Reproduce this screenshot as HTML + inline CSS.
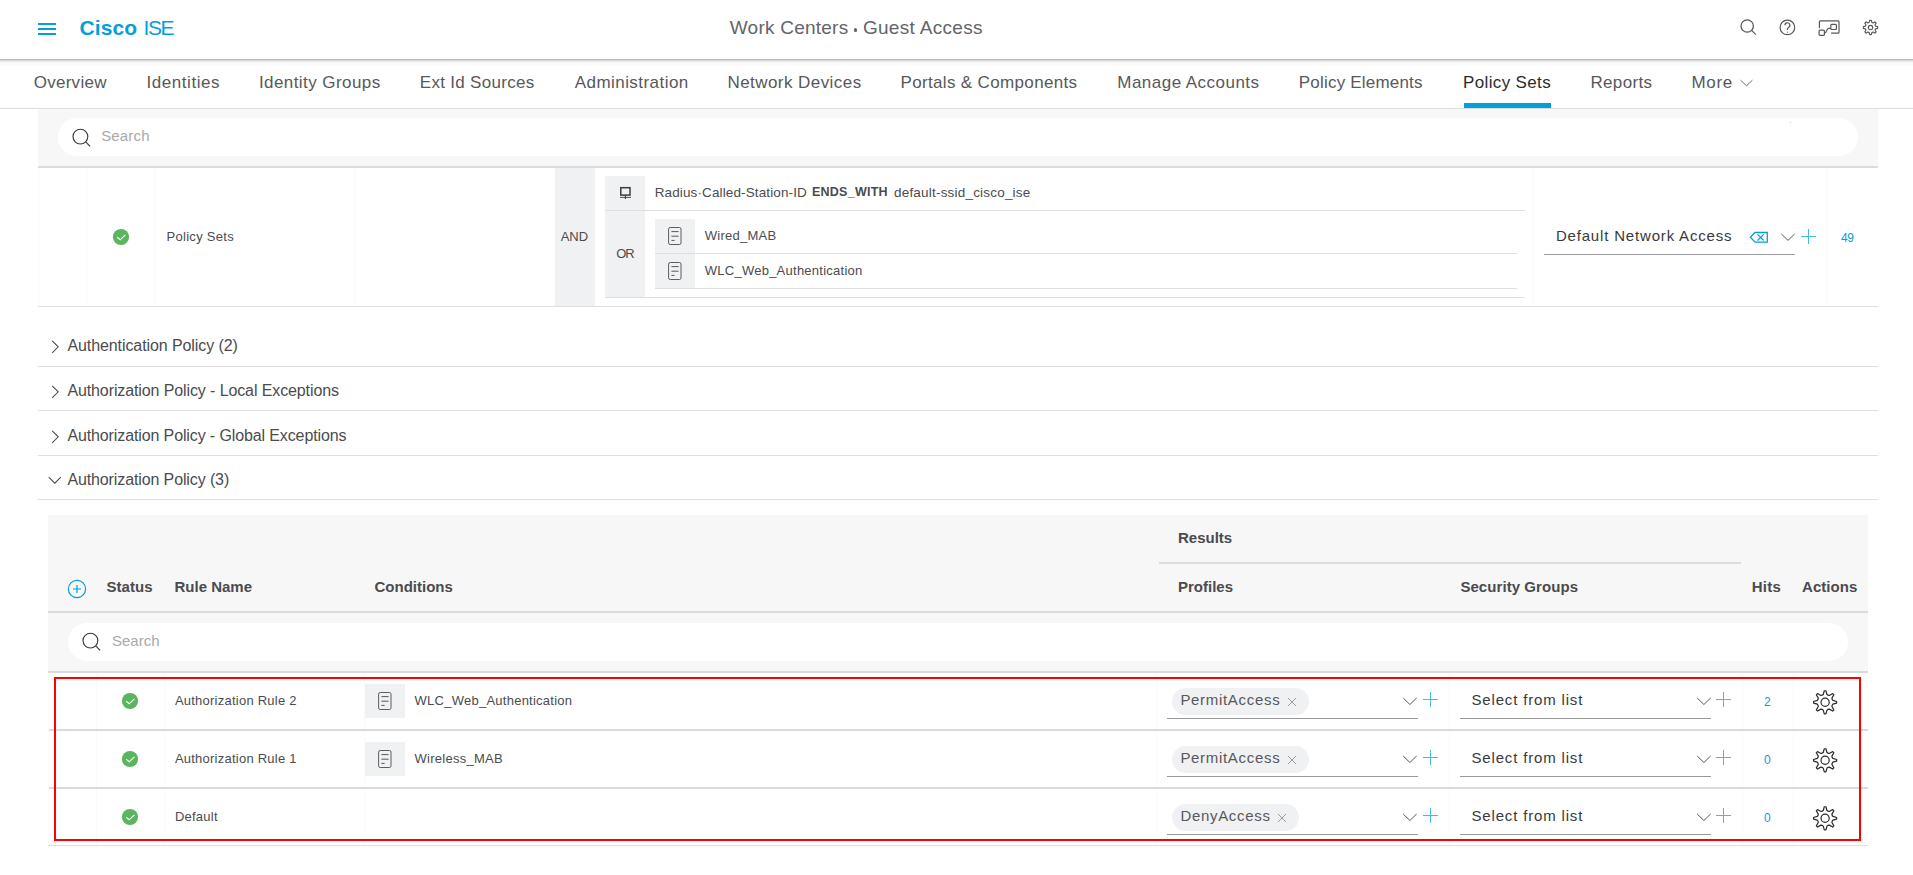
<!DOCTYPE html><html><head><meta charset="utf-8"><style>
html,body{margin:0;padding:0;width:1913px;height:875px;overflow:hidden;background:#fff;font-family:"Liberation Sans",sans-serif}
.t{position:absolute;white-space:pre}
.r{position:absolute;display:block}
</style></head><body>
<div class="r" style="left:0px;top:0px;width:1913px;height:59px;background:#fff"></div>
<div class="r" style="left:0px;top:59px;width:1913px;height:1px;background:#bdbdbd"></div>
<div class="r" style="left:0px;top:60px;width:1913px;height:1px;background:#d8d8d8"></div>
<div class="r" style="left:0px;top:61px;width:1913px;height:1px;background:#ececec"></div>
<div class="r" style="left:0px;top:62px;width:1913px;height:1px;background:#f7f7f7"></div>
<div class="r" style="left:0px;top:63px;width:1913px;height:3px;background:#fbfbfb"></div>
<div class="r" style="left:38px;top:23px;width:18px;height:2px;background:#049fd9"></div>
<div class="r" style="left:38px;top:28px;width:18px;height:2px;background:#049fd9"></div>
<div class="r" style="left:38px;top:33px;width:18px;height:2px;background:#049fd9"></div>
<div class="t" style="left:79.4px;top:17.22px;font-size:21px;line-height:21px;font-weight:bold;color:#049fd9;letter-spacing:0.125px;">Cisco</div>
<div class="t" style="left:143.5px;top:17.22px;font-size:21px;line-height:21px;font-weight:normal;color:#049fd9;letter-spacing:-1.45px;">ISE</div>
<div class="t" style="left:729.8px;top:17.92px;font-size:19px;line-height:19px;font-weight:normal;color:#646467;letter-spacing:0.236px;">Work Centers</div>
<div class="t" style="left:862.9px;top:17.92px;font-size:19px;line-height:19px;font-weight:normal;color:#646467;letter-spacing:0.309px;">Guest Access</div>
<div class="r" style="left:853.6px;top:28.4px;width:3.2px;height:3.2px;background:#646467;border-radius:50%"></div>
<svg class="r" style="left:1738px;top:16px" width="20" height="20" viewBox="0 0 20 20"><circle cx="9.2" cy="10" r="6.2" fill="none" stroke="#58585b" stroke-width="1.3"/><line x1="13.6" y1="14.4" x2="17.8" y2="18.6" stroke="#58585b" stroke-width="1.3"/></svg>
<svg class="r" style="left:1778px;top:18px" width="20" height="20" viewBox="0 0 20 20"><circle cx="9.4" cy="9.4" r="7.3" fill="none" stroke="#58585b" stroke-width="1.2"/><path d="M6.9 7.3a2.5 2.5 0 1 1 3.6 2.2c-.8.4-1.1.9-1.1 1.7v.9" fill="none" stroke="#58585b" stroke-width="1.2"/><circle cx="9.4" cy="14.1" r=".7" fill="#58585b"/></svg>
<svg class="r" style="left:1817px;top:18px" width="24" height="20" viewBox="0 0 24 20"><path d="M2.4 10.3V3.8a.9.9 0 0 1 .9-.9h17.8a.9.9 0 0 1 .9.9v10.4a.9.9 0 0 1-.9.9H14.1" fill="none" stroke="#58585b" stroke-width="1.2"/><rect x="2.1" y="12.2" width="5.3" height="5.2" rx=".9" fill="none" stroke="#58585b" stroke-width="1.2"/><rect x="13.8" y="6.4" width="5.6" height="5.1" rx=".9" fill="none" stroke="#58585b" stroke-width="1.2"/><path d="M7.5 15c1.3 0 1.6-.6 2.1-2.1.5-1.4.9-2.6 2.3-2.6h2" fill="none" stroke="#58585b" stroke-width="1.2"/></svg>
<svg class="r" style="left:1861px;top:18px" width="20" height="20" viewBox="0 0 20 20"><path d="M8.62 2.35 L10.38 2.35 L10.83 4.37 Q11.39 4.95 12.19 4.93 L13.93 3.83 L15.17 5.07 L14.07 6.81 Q14.05 7.61 14.63 8.17 L16.65 8.62 L16.65 10.38 L14.63 10.83 Q14.05 11.39 14.07 12.19 L15.17 13.93 L13.93 15.17 L12.19 14.07 Q11.39 14.05 10.83 14.63 L10.38 16.65 L8.62 16.65 L8.17 14.63 Q7.61 14.05 6.81 14.07 L5.07 15.17 L3.83 13.93 L4.93 12.19 Q4.95 11.39 4.37 10.83 L2.35 10.38 L2.35 8.62 L4.37 8.17 Q4.95 7.61 4.93 6.81 L3.83 5.07 L5.07 3.83 L6.81 4.93 Q7.61 4.95 8.17 4.37 Z" fill="none" stroke="#58585b" stroke-width="1.15" stroke-linejoin="round"/><circle cx="9.5" cy="9.5" r="2.2" fill="none" stroke="#58585b" stroke-width="1.15"/></svg>
<div class="t" style="left:33.7px;top:73.61px;font-size:17px;line-height:17px;font-weight:normal;color:#58585b;letter-spacing:0.271px;">Overview</div>
<div class="t" style="left:146.6px;top:73.61px;font-size:17px;line-height:17px;font-weight:normal;color:#58585b;letter-spacing:0.544px;">Identities</div>
<div class="t" style="left:258.9px;top:73.61px;font-size:17px;line-height:17px;font-weight:normal;color:#58585b;letter-spacing:0.429px;">Identity Groups</div>
<div class="t" style="left:419.8px;top:73.61px;font-size:17px;line-height:17px;font-weight:normal;color:#58585b;letter-spacing:0.3px;">Ext Id Sources</div>
<div class="t" style="left:574.7px;top:73.61px;font-size:17px;line-height:17px;font-weight:normal;color:#58585b;letter-spacing:0.454px;">Administration</div>
<div class="t" style="left:727.5px;top:73.61px;font-size:17px;line-height:17px;font-weight:normal;color:#58585b;letter-spacing:0.436px;">Network Devices</div>
<div class="t" style="left:900.5px;top:73.61px;font-size:17px;line-height:17px;font-weight:normal;color:#58585b;letter-spacing:0.342px;">Portals &amp; Components</div>
<div class="t" style="left:1117.3px;top:73.61px;font-size:17px;line-height:17px;font-weight:normal;color:#58585b;letter-spacing:0.471px;">Manage Accounts</div>
<div class="t" style="left:1298.8px;top:73.61px;font-size:17px;line-height:17px;font-weight:normal;color:#58585b;letter-spacing:0.2px;">Policy Elements</div>
<div class="t" style="left:1463.0px;top:73.61px;font-size:17px;line-height:17px;font-weight:normal;color:#2b2b2d;letter-spacing:0.36px;">Policy Sets</div>
<div class="t" style="left:1590.4px;top:73.61px;font-size:17px;line-height:17px;font-weight:normal;color:#58585b;letter-spacing:0.35px;">Reports</div>
<div class="t" style="left:1691.4px;top:73.61px;font-size:17px;line-height:17px;font-weight:normal;color:#58585b;letter-spacing:0.7px;">More</div>
<svg class="r" style="left:1739px;top:76.7px" width="16" height="10" viewBox="0 0 16 10"><path d="M1.6 3.2l5.9 5.6 5.9-5.6" fill="none" stroke="#6a6a6d" stroke-width="1"/></svg>
<div class="r" style="left:1464px;top:103px;width:87px;height:5px;background:#049fd9"></div>
<div class="r" style="left:0px;top:108px;width:1913px;height:1px;background:#dcdcdc"></div>
<div class="r" style="left:38px;top:109px;width:1840px;height:57px;background:#f7f7f7"></div>
<div class="r" style="left:38px;top:166px;width:1840px;height:2px;background:#dcdcdc"></div>
<div class="r" style="left:58px;top:118px;width:1800px;height:38px;background:#fff;border-radius:19px"></div>
<svg class="r" style="left:71px;top:127px" width="22" height="22" viewBox="0 0 22 22"><circle cx="9.4" cy="9.6" r="7.4" fill="none" stroke="#3c3c3f" stroke-width="1.15"/><line x1="14.7" y1="14.9" x2="19.1" y2="19.3" stroke="#3c3c3f" stroke-width="1.2"/></svg>
<div class="t" style="left:101.2px;top:128.30px;font-size:15px;line-height:15px;font-weight:normal;color:#a9a9ab;letter-spacing:0.16px;">Search</div>
<div class="r" style="left:1790px;top:122px;width:1px;height:1px;background:#c9c9c9"></div>
<div class="r" style="left:38px;top:168px;width:1px;height:138px;background:#fafafa"></div>
<div class="r" style="left:86px;top:168px;width:1px;height:138px;background:#fafafa"></div>
<div class="r" style="left:154px;top:168px;width:1px;height:138px;background:#fafafa"></div>
<div class="r" style="left:354px;top:168px;width:1px;height:138px;background:#fafafa"></div>
<div class="r" style="left:1533px;top:168px;width:1px;height:138px;background:#fafafa"></div>
<div class="r" style="left:1826px;top:168px;width:1px;height:138px;background:#fafafa"></div>
<svg class="r" style="left:111.5px;top:228.3px" width="18" height="18" viewBox="0 0 18 18"><circle cx="9" cy="9" r="8.1" fill="#5ab55e"/><path d="M5.2 9.2l3 2.6 5.2-5" fill="none" stroke="#fff" stroke-width="1.15"/></svg>
<div class="t" style="left:166.5px;top:230.00px;font-size:13px;line-height:13px;font-weight:normal;color:#4b4b4e;letter-spacing:0.29px;">Policy Sets</div>
<div class="r" style="left:555px;top:168px;width:40px;height:138px;background:#f0f1f3"></div>
<div class="t" style="left:560.7px;top:230.00px;font-size:13px;line-height:13px;font-weight:normal;color:#4b4b4e;letter-spacing:-0.05px;">AND</div>
<div class="r" style="left:605px;top:176px;width:40px;height:34px;background:#f0f1f3"></div>
<svg class="r" style="left:618px;top:184px" width="16" height="16" viewBox="0 0 16 16"><rect x="2.8" y="3.7" width="9.2" height="7.4" fill="none" stroke="#3c3c3f" stroke-width="1.5"/><line x1="2" y1="13.4" x2="13" y2="13.4" stroke="#3c3c3f" stroke-width="0.9"/><line x1="7.4" y1="11.2" x2="7.4" y2="15" stroke="#3c3c3f" stroke-width="1.1"/></svg>
<div class="t" style="left:654.7px;top:185.57px;font-size:13.5px;line-height:13.5px;font-weight:normal;color:#4b4b4e;letter-spacing:0.122px;">Radius&middot;Called-Station-ID</div>
<div class="t" style="left:811.9000000000001px;top:186.42px;font-size:12.5px;line-height:12.5px;font-weight:bold;color:#4b4b4e;letter-spacing:0.262px;">ENDS_WITH</div>
<div class="t" style="left:894.0px;top:185.57px;font-size:13.5px;line-height:13.5px;font-weight:normal;color:#4b4b4e;letter-spacing:0.2px;">default-ssid_cisco_ise</div>
<div class="r" style="left:605px;top:210px;width:920px;height:1px;background:#dfdfdf"></div>
<div class="r" style="left:605px;top:211px;width:40px;height:86px;background:#f0f1f3"></div>
<div class="t" style="left:616.3px;top:247.00px;font-size:13px;line-height:13px;font-weight:normal;color:#4b4b4e;letter-spacing:-1.2px;">OR</div>
<div class="r" style="left:655px;top:219px;width:40px;height:34px;background:#f0f1f3"></div>
<svg class="r" style="left:666.8px;top:226px" width="16" height="20" viewBox="0 0 16 20"><rect x="1.6" y="1.5" width="12.4" height="17" rx="1.6" fill="none" stroke="#5d5d60" stroke-width="1"/><line x1="4.4" y1="5.6" x2="11.6" y2="5.6" stroke="#58585b" stroke-width="1"/><line x1="4.4" y1="10.2" x2="11.6" y2="10.2" stroke="#58585b" stroke-width="1"/><line x1="4.4" y1="14.4" x2="7.6" y2="14.4" stroke="#58585b" stroke-width="1"/></svg>
<div class="t" style="left:704.8px;top:229.00px;font-size:13px;line-height:13px;font-weight:normal;color:#4b4b4e;letter-spacing:0.248px;">Wired_MAB</div>
<div class="r" style="left:655px;top:253px;width:862px;height:1px;background:#dfdfdf"></div>
<div class="r" style="left:655px;top:254px;width:40px;height:34px;background:#f0f1f3"></div>
<svg class="r" style="left:666.8px;top:261px" width="16" height="20" viewBox="0 0 16 20"><rect x="1.6" y="1.5" width="12.4" height="17" rx="1.6" fill="none" stroke="#5d5d60" stroke-width="1"/><line x1="4.4" y1="5.6" x2="11.6" y2="5.6" stroke="#58585b" stroke-width="1"/><line x1="4.4" y1="10.2" x2="11.6" y2="10.2" stroke="#58585b" stroke-width="1"/><line x1="4.4" y1="14.4" x2="7.6" y2="14.4" stroke="#58585b" stroke-width="1"/></svg>
<div class="t" style="left:704.8px;top:264.00px;font-size:13px;line-height:13px;font-weight:normal;color:#4b4b4e;letter-spacing:0.248px;">WLC_Web_Authentication</div>
<div class="r" style="left:655px;top:288px;width:862px;height:1px;background:#dfdfdf"></div>
<div class="r" style="left:605px;top:297px;width:920px;height:1px;background:#dfdfdf"></div>
<div class="t" style="left:1555.9px;top:228.30px;font-size:15px;line-height:15px;font-weight:normal;color:#39393b;letter-spacing:0.824px;">Default Network Access</div>
<svg class="r" style="left:1747px;top:229px" width="24" height="16" viewBox="0 0 24 16"><path d="M8 3.5H20.3v9.6H8L3.4 8.3z" fill="none" stroke="#049fd9" stroke-width="1.3" stroke-linejoin="miter"/><path d="M10.5 5.3l6.2 6.2M16.7 5.3l-6.2 6.2" stroke="#049fd9" stroke-width="1.2"/></svg>
<svg class="r" style="left:1779px;top:230px" width="18" height="12" viewBox="0 0 18 12"><path d="M2.4 4l6.6 6.4 6.6-6.4" fill="none" stroke="#58585b" stroke-width="1"/></svg>
<div class="r" style="left:1808px;top:229px;width:1px;height:15px;background:#45b9e6"></div>
<div class="r" style="left:1801px;top:236px;width:15px;height:1px;background:#45b9e6"></div>
<div class="r" style="left:1544px;top:254px;width:251px;height:1px;background:#9b9b9b"></div>
<div class="t" style="left:1841.1px;top:231.84px;font-size:12px;line-height:12px;font-weight:normal;color:#049fd9;letter-spacing:-0.4px;">49</div>
<div class="r" style="left:38px;top:306px;width:1840px;height:1px;background:#dfdfdf"></div>
<div class="t" style="left:67.4px;top:338.46px;font-size:16px;line-height:16px;font-weight:normal;color:#4b4b4e;letter-spacing:-0.087px;">Authentication Policy (2)</div>
<svg class="r" style="left:50px;top:339px" width="10" height="16" viewBox="0 0 10 16"><path d="M2.2 1.8l6 6-6 6" fill="none" stroke="#4b4b4e" stroke-width="1.05"/></svg>
<div class="t" style="left:67.4px;top:383.46px;font-size:16px;line-height:16px;font-weight:normal;color:#4b4b4e;letter-spacing:-0.108px;">Authorization Policy - Local Exceptions</div>
<svg class="r" style="left:50px;top:384px" width="10" height="16" viewBox="0 0 10 16"><path d="M2.2 1.8l6 6-6 6" fill="none" stroke="#4b4b4e" stroke-width="1.05"/></svg>
<div class="t" style="left:67.4px;top:428.46px;font-size:16px;line-height:16px;font-weight:normal;color:#4b4b4e;letter-spacing:-0.118px;">Authorization Policy - Global Exceptions</div>
<svg class="r" style="left:50px;top:429px" width="10" height="16" viewBox="0 0 10 16"><path d="M2.2 1.8l6 6-6 6" fill="none" stroke="#4b4b4e" stroke-width="1.05"/></svg>
<div class="t" style="left:67.4px;top:472.46px;font-size:16px;line-height:16px;font-weight:normal;color:#4b4b4e;letter-spacing:-0.117px;">Authorization Policy (3)</div>
<svg class="r" style="left:47px;top:474.5px" width="16" height="10" viewBox="0 0 16 10"><path d="M1.8 2.2l6 6 6-6" fill="none" stroke="#4b4b4e" stroke-width="1.05"/></svg>
<div class="r" style="left:38px;top:366px;width:1840px;height:1px;background:#dfdfdf"></div>
<div class="r" style="left:38px;top:410px;width:1840px;height:1px;background:#dfdfdf"></div>
<div class="r" style="left:38px;top:455px;width:1840px;height:1px;background:#dfdfdf"></div>
<div class="r" style="left:38px;top:499px;width:1840px;height:1px;background:#dfdfdf"></div>
<div class="r" style="left:48px;top:515px;width:1820px;height:157px;background:#f7f7f7"></div>
<div class="t" style="left:1178px;top:530.30px;font-size:15px;line-height:15px;font-weight:bold;color:#4b4b4e;letter-spacing:0px;">Results</div>
<div class="r" style="left:1159px;top:562px;width:582px;height:2px;background:#dcdcdc"></div>
<svg class="r" style="left:67px;top:579px" width="20" height="20" viewBox="0 0 20 20"><circle cx="10" cy="10" r="8.6" fill="none" stroke="#049fd9" stroke-width="1.2"/><path d="M10 6v8M6 10h8" stroke="#049fd9" stroke-width="1.2"/></svg>
<div class="t" style="left:106.5px;top:579.30px;font-size:15px;line-height:15px;font-weight:bold;color:#4b4b4e;letter-spacing:0.06px;">Status</div>
<div class="t" style="left:174.5px;top:579.30px;font-size:15px;line-height:15px;font-weight:bold;color:#4b4b4e;letter-spacing:0px;">Rule Name</div>
<div class="t" style="left:374.5px;top:579.30px;font-size:15px;line-height:15px;font-weight:bold;color:#4b4b4e;letter-spacing:0px;">Conditions</div>
<div class="t" style="left:1178px;top:579.30px;font-size:15px;line-height:15px;font-weight:bold;color:#4b4b4e;letter-spacing:0px;">Profiles</div>
<div class="t" style="left:1460.4px;top:579.30px;font-size:15px;line-height:15px;font-weight:bold;color:#4b4b4e;letter-spacing:0.064px;">Security Groups</div>
<div class="t" style="left:1751.8px;top:579.30px;font-size:15px;line-height:15px;font-weight:bold;color:#4b4b4e;letter-spacing:0.2px;">Hits</div>
<div class="t" style="left:1802.0px;top:579.30px;font-size:15px;line-height:15px;font-weight:bold;color:#4b4b4e;letter-spacing:0.05px;">Actions</div>
<div class="r" style="left:48px;top:611px;width:1820px;height:2px;background:#dadada"></div>
<div class="r" style="left:68px;top:623px;width:1780px;height:38px;background:#fff;border-radius:19px"></div>
<svg class="r" style="left:81px;top:631px" width="22" height="22" viewBox="0 0 22 22"><circle cx="9.4" cy="9.6" r="7.4" fill="none" stroke="#3c3c3f" stroke-width="1.15"/><line x1="14.7" y1="14.9" x2="19.1" y2="19.3" stroke="#3c3c3f" stroke-width="1.2"/></svg>
<div class="t" style="left:112px;top:633.30px;font-size:15px;line-height:15px;font-weight:normal;color:#a9a9ab;letter-spacing:0px;">Search</div>
<div class="r" style="left:48px;top:671px;width:1820px;height:2px;background:#dadada"></div>
<div class="r" style="left:96px;top:673px;width:1px;height:56px;background:#fafafa"></div>
<div class="r" style="left:164px;top:673px;width:1px;height:56px;background:#fafafa"></div>
<div class="r" style="left:364px;top:673px;width:1px;height:56px;background:#fafafa"></div>
<div class="r" style="left:1156px;top:673px;width:1px;height:56px;background:#fafafa"></div>
<div class="r" style="left:1449px;top:673px;width:1px;height:56px;background:#fafafa"></div>
<div class="r" style="left:1742px;top:673px;width:1px;height:56px;background:#fafafa"></div>
<div class="r" style="left:1793px;top:673px;width:1px;height:56px;background:#fafafa"></div>
<svg class="r" style="left:121.4px;top:692px" width="18" height="18" viewBox="0 0 18 18"><circle cx="9" cy="9" r="8.1" fill="#5ab55e"/><path d="M5.2 9.2l3 2.6 5.2-5" fill="none" stroke="#fff" stroke-width="1.15"/></svg>
<div class="t" style="left:174.9px;top:694.00px;font-size:13px;line-height:13px;font-weight:normal;color:#4b4b4e;letter-spacing:0.237px;">Authorization Rule 2</div>
<div class="r" style="left:365px;top:684px;width:40px;height:34px;background:#f0f1f3"></div>
<svg class="r" style="left:376.8px;top:691px" width="16" height="20" viewBox="0 0 16 20"><rect x="1.6" y="1.5" width="12.4" height="17" rx="1.6" fill="none" stroke="#5d5d60" stroke-width="1"/><line x1="4.4" y1="5.6" x2="11.6" y2="5.6" stroke="#58585b" stroke-width="1"/><line x1="4.4" y1="10.2" x2="11.6" y2="10.2" stroke="#58585b" stroke-width="1"/><line x1="4.4" y1="14.4" x2="7.6" y2="14.4" stroke="#58585b" stroke-width="1"/></svg>
<div class="t" style="left:414.6px;top:694.00px;font-size:13px;line-height:13px;font-weight:normal;color:#4b4b4e;letter-spacing:0.248px;">WLC_Web_Authentication</div>
<div class="r" style="left:1172px;top:688px;width:137px;height:27px;background:#f0f1f3;border-radius:14px"></div>
<div class="t" style="left:1180.4px;top:692.30px;font-size:15px;line-height:15px;font-weight:normal;color:#58585b;letter-spacing:0.691px;">PermitAccess</div>
<svg class="r" style="left:1287px;top:697px" width="10" height="10" viewBox="0 0 10 10"><path d="M1 1l8 8M9 1l-8 8" stroke="#9a9a9d" stroke-width="1"/></svg>
<div class="r" style="left:1167px;top:718px;width:251px;height:1px;background:#999999"></div>
<svg class="r" style="left:1401px;top:694px" width="18" height="12" viewBox="0 0 18 12"><path d="M2.2 4l6.7 6.5 6.7-6.5" fill="none" stroke="#58585b" stroke-width="1"/></svg>
<div class="r" style="left:1430px;top:692px;width:1px;height:15px;background:#45b9e6"></div>
<div class="r" style="left:1423px;top:699px;width:15px;height:1px;background:#45b9e6"></div>
<div class="t" style="left:1471.5px;top:692.30px;font-size:15px;line-height:15px;font-weight:normal;color:#39393b;letter-spacing:0.833px;">Select from list</div>
<div class="r" style="left:1460px;top:718px;width:251px;height:1px;background:#999999"></div>
<svg class="r" style="left:1695px;top:694px" width="18" height="12" viewBox="0 0 18 12"><path d="M2.2 4l6.7 6.5 6.7-6.5" fill="none" stroke="#58585b" stroke-width="1"/></svg>
<div class="r" style="left:1723px;top:692px;width:1px;height:15px;background:#45b9e6"></div>
<div class="r" style="left:1716px;top:699px;width:15px;height:1px;background:#45b9e6"></div>
<div class="t" style="left:1764px;top:695.84px;font-size:12px;line-height:12px;font-weight:normal;color:#049fd9;letter-spacing:0px;">2</div>
<svg class="r" style="left:1812px;top:689px" width="26" height="26" viewBox="0 0 26 26"><path d="M12.29 1.73 L13.91 1.73 L14.97 5.52 Q15.95 6.43 17.28 6.48 L20.71 4.55 L21.85 5.69 L19.92 9.12 Q19.97 10.45 20.88 11.43 L24.67 12.49 L24.67 14.11 L20.88 15.17 Q19.97 16.15 19.92 17.48 L21.85 20.91 L20.71 22.05 L17.28 20.12 Q15.95 20.17 14.97 21.08 L13.91 24.87 L12.29 24.87 L11.23 21.08 Q10.25 20.17 8.92 20.12 L5.49 22.05 L4.35 20.91 L6.28 17.48 Q6.23 16.15 5.32 15.17 L1.53 14.11 L1.53 12.49 L5.32 11.43 Q6.23 10.45 6.28 9.12 L4.35 5.69 L5.49 4.55 L8.92 6.48 Q10.25 6.43 11.23 5.52 Z" fill="none" stroke="#2a2a2c" stroke-width="1.2" stroke-linejoin="round"/><circle cx="13.1" cy="13.3" r="4.1" fill="none" stroke="#2a2a2c" stroke-width="1.2"/></svg>
<div class="r" style="left:48px;top:729px;width:1820px;height:2px;background:#dadada"></div>
<div class="r" style="left:96px;top:731px;width:1px;height:56px;background:#fafafa"></div>
<div class="r" style="left:164px;top:731px;width:1px;height:56px;background:#fafafa"></div>
<div class="r" style="left:364px;top:731px;width:1px;height:56px;background:#fafafa"></div>
<div class="r" style="left:1156px;top:731px;width:1px;height:56px;background:#fafafa"></div>
<div class="r" style="left:1449px;top:731px;width:1px;height:56px;background:#fafafa"></div>
<div class="r" style="left:1742px;top:731px;width:1px;height:56px;background:#fafafa"></div>
<div class="r" style="left:1793px;top:731px;width:1px;height:56px;background:#fafafa"></div>
<svg class="r" style="left:121.4px;top:750px" width="18" height="18" viewBox="0 0 18 18"><circle cx="9" cy="9" r="8.1" fill="#5ab55e"/><path d="M5.2 9.2l3 2.6 5.2-5" fill="none" stroke="#fff" stroke-width="1.15"/></svg>
<div class="t" style="left:174.9px;top:752.00px;font-size:13px;line-height:13px;font-weight:normal;color:#4b4b4e;letter-spacing:0.237px;">Authorization Rule 1</div>
<div class="r" style="left:365px;top:742px;width:40px;height:34px;background:#f0f1f3"></div>
<svg class="r" style="left:376.8px;top:749px" width="16" height="20" viewBox="0 0 16 20"><rect x="1.6" y="1.5" width="12.4" height="17" rx="1.6" fill="none" stroke="#5d5d60" stroke-width="1"/><line x1="4.4" y1="5.6" x2="11.6" y2="5.6" stroke="#58585b" stroke-width="1"/><line x1="4.4" y1="10.2" x2="11.6" y2="10.2" stroke="#58585b" stroke-width="1"/><line x1="4.4" y1="14.4" x2="7.6" y2="14.4" stroke="#58585b" stroke-width="1"/></svg>
<div class="t" style="left:414.6px;top:752.00px;font-size:13px;line-height:13px;font-weight:normal;color:#4b4b4e;letter-spacing:0.248px;">Wireless_MAB</div>
<div class="r" style="left:1172px;top:746px;width:137px;height:27px;background:#f0f1f3;border-radius:14px"></div>
<div class="t" style="left:1180.4px;top:750.30px;font-size:15px;line-height:15px;font-weight:normal;color:#58585b;letter-spacing:0.691px;">PermitAccess</div>
<svg class="r" style="left:1287px;top:755px" width="10" height="10" viewBox="0 0 10 10"><path d="M1 1l8 8M9 1l-8 8" stroke="#9a9a9d" stroke-width="1"/></svg>
<div class="r" style="left:1167px;top:776px;width:251px;height:1px;background:#999999"></div>
<svg class="r" style="left:1401px;top:752px" width="18" height="12" viewBox="0 0 18 12"><path d="M2.2 4l6.7 6.5 6.7-6.5" fill="none" stroke="#58585b" stroke-width="1"/></svg>
<div class="r" style="left:1430px;top:750px;width:1px;height:15px;background:#45b9e6"></div>
<div class="r" style="left:1423px;top:757px;width:15px;height:1px;background:#45b9e6"></div>
<div class="t" style="left:1471.5px;top:750.30px;font-size:15px;line-height:15px;font-weight:normal;color:#39393b;letter-spacing:0.833px;">Select from list</div>
<div class="r" style="left:1460px;top:776px;width:251px;height:1px;background:#999999"></div>
<svg class="r" style="left:1695px;top:752px" width="18" height="12" viewBox="0 0 18 12"><path d="M2.2 4l6.7 6.5 6.7-6.5" fill="none" stroke="#58585b" stroke-width="1"/></svg>
<div class="r" style="left:1723px;top:750px;width:1px;height:15px;background:#45b9e6"></div>
<div class="r" style="left:1716px;top:757px;width:15px;height:1px;background:#45b9e6"></div>
<div class="t" style="left:1764px;top:753.84px;font-size:12px;line-height:12px;font-weight:normal;color:#049fd9;letter-spacing:0px;">0</div>
<svg class="r" style="left:1812px;top:747px" width="26" height="26" viewBox="0 0 26 26"><path d="M12.29 1.73 L13.91 1.73 L14.97 5.52 Q15.95 6.43 17.28 6.48 L20.71 4.55 L21.85 5.69 L19.92 9.12 Q19.97 10.45 20.88 11.43 L24.67 12.49 L24.67 14.11 L20.88 15.17 Q19.97 16.15 19.92 17.48 L21.85 20.91 L20.71 22.05 L17.28 20.12 Q15.95 20.17 14.97 21.08 L13.91 24.87 L12.29 24.87 L11.23 21.08 Q10.25 20.17 8.92 20.12 L5.49 22.05 L4.35 20.91 L6.28 17.48 Q6.23 16.15 5.32 15.17 L1.53 14.11 L1.53 12.49 L5.32 11.43 Q6.23 10.45 6.28 9.12 L4.35 5.69 L5.49 4.55 L8.92 6.48 Q10.25 6.43 11.23 5.52 Z" fill="none" stroke="#2a2a2c" stroke-width="1.2" stroke-linejoin="round"/><circle cx="13.1" cy="13.3" r="4.1" fill="none" stroke="#2a2a2c" stroke-width="1.2"/></svg>
<div class="r" style="left:48px;top:787px;width:1820px;height:2px;background:#dadada"></div>
<div class="r" style="left:96px;top:789px;width:1px;height:56px;background:#fafafa"></div>
<div class="r" style="left:164px;top:789px;width:1px;height:56px;background:#fafafa"></div>
<div class="r" style="left:364px;top:789px;width:1px;height:56px;background:#fafafa"></div>
<div class="r" style="left:1156px;top:789px;width:1px;height:56px;background:#fafafa"></div>
<div class="r" style="left:1449px;top:789px;width:1px;height:56px;background:#fafafa"></div>
<div class="r" style="left:1742px;top:789px;width:1px;height:56px;background:#fafafa"></div>
<div class="r" style="left:1793px;top:789px;width:1px;height:56px;background:#fafafa"></div>
<svg class="r" style="left:121.4px;top:808px" width="18" height="18" viewBox="0 0 18 18"><circle cx="9" cy="9" r="8.1" fill="#5ab55e"/><path d="M5.2 9.2l3 2.6 5.2-5" fill="none" stroke="#fff" stroke-width="1.15"/></svg>
<div class="t" style="left:174.9px;top:810.00px;font-size:13px;line-height:13px;font-weight:normal;color:#4b4b4e;letter-spacing:0.237px;">Default</div>
<div class="r" style="left:1172px;top:804px;width:127px;height:27px;background:#f0f1f3;border-radius:14px"></div>
<div class="t" style="left:1180.4px;top:808.30px;font-size:15px;line-height:15px;font-weight:normal;color:#58585b;letter-spacing:0.691px;">DenyAccess</div>
<svg class="r" style="left:1277px;top:813px" width="10" height="10" viewBox="0 0 10 10"><path d="M1 1l8 8M9 1l-8 8" stroke="#9a9a9d" stroke-width="1"/></svg>
<div class="r" style="left:1167px;top:834px;width:251px;height:1px;background:#999999"></div>
<svg class="r" style="left:1401px;top:810px" width="18" height="12" viewBox="0 0 18 12"><path d="M2.2 4l6.7 6.5 6.7-6.5" fill="none" stroke="#58585b" stroke-width="1"/></svg>
<div class="r" style="left:1430px;top:808px;width:1px;height:15px;background:#45b9e6"></div>
<div class="r" style="left:1423px;top:815px;width:15px;height:1px;background:#45b9e6"></div>
<div class="t" style="left:1471.5px;top:808.30px;font-size:15px;line-height:15px;font-weight:normal;color:#39393b;letter-spacing:0.833px;">Select from list</div>
<div class="r" style="left:1460px;top:834px;width:251px;height:1px;background:#999999"></div>
<svg class="r" style="left:1695px;top:810px" width="18" height="12" viewBox="0 0 18 12"><path d="M2.2 4l6.7 6.5 6.7-6.5" fill="none" stroke="#58585b" stroke-width="1"/></svg>
<div class="r" style="left:1723px;top:808px;width:1px;height:15px;background:#45b9e6"></div>
<div class="r" style="left:1716px;top:815px;width:15px;height:1px;background:#45b9e6"></div>
<div class="t" style="left:1764px;top:811.84px;font-size:12px;line-height:12px;font-weight:normal;color:#049fd9;letter-spacing:0px;">0</div>
<svg class="r" style="left:1812px;top:805px" width="26" height="26" viewBox="0 0 26 26"><path d="M12.29 1.73 L13.91 1.73 L14.97 5.52 Q15.95 6.43 17.28 6.48 L20.71 4.55 L21.85 5.69 L19.92 9.12 Q19.97 10.45 20.88 11.43 L24.67 12.49 L24.67 14.11 L20.88 15.17 Q19.97 16.15 19.92 17.48 L21.85 20.91 L20.71 22.05 L17.28 20.12 Q15.95 20.17 14.97 21.08 L13.91 24.87 L12.29 24.87 L11.23 21.08 Q10.25 20.17 8.92 20.12 L5.49 22.05 L4.35 20.91 L6.28 17.48 Q6.23 16.15 5.32 15.17 L1.53 14.11 L1.53 12.49 L5.32 11.43 Q6.23 10.45 6.28 9.12 L4.35 5.69 L5.49 4.55 L8.92 6.48 Q10.25 6.43 11.23 5.52 Z" fill="none" stroke="#2a2a2c" stroke-width="1.2" stroke-linejoin="round"/><circle cx="13.1" cy="13.3" r="4.1" fill="none" stroke="#2a2a2c" stroke-width="1.2"/></svg>
<div class="r" style="left:48px;top:845px;width:1820px;height:1px;background:#dfdfdf"></div>
<div class="r" style="left:48px;top:673px;width:1px;height:172px;background:#fafafa"></div>
<div class="r" style="left:54px;top:677px;width:1807px;height:164px;border:2px solid #ff0000;box-sizing:border-box"></div>
</body></html>
